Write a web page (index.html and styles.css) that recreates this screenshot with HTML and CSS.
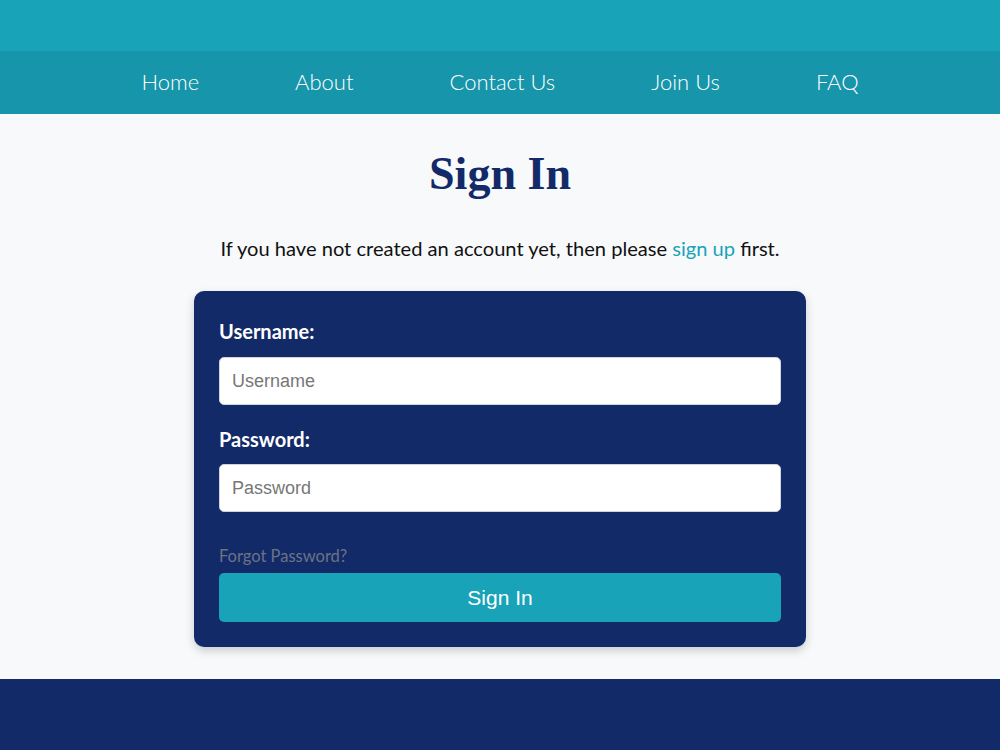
FILE: index.html
```html
<!DOCTYPE html>
<html lang="en">
<head>
<meta charset="utf-8">
<title>Sign In</title>
<link rel="stylesheet" href="styles.css">
</head>
<body>
<header class="site-header">
  <div class="topbar"></div>
  <nav class="nav">
    <a href="#" class="nav-link">Home</a>
    <a href="#" class="nav-link">About</a>
    <a href="#" class="nav-link">Contact Us</a>
    <a href="#" class="nav-link">Join Us</a>
    <a href="#" class="nav-link">FAQ</a>
  </nav>
</header>
<main class="main">
  <h1 class="title">Sign In</h1>
  <p class="intro">If you have not created an account yet, then please <a href="#" class="link">sign up</a> first.</p>
  <form class="card">
    <label class="label" for="u">Username:</label>
    <input class="input" id="u" type="text" placeholder="Username">
    <label class="label label-second" for="p">Password:</label>
    <input class="input" id="p" type="password" placeholder="Password">
    <a href="#" class="forgot">Forgot Password?</a>
    <button type="button" class="btn">Sign In</button>
  </form>
</main>
<footer class="footer"></footer>
</body>
</html>
```

FILE: styles.css
```css
* { box-sizing: border-box; }
html, body { margin: 0; padding: 0; }
body {
  background: #f7f9fb;
  font-family: Lato, "Open Sans", sans-serif;
  color: #111;
}
.topbar {
  height: 51px;
  background: #18a3b8;
}
.nav {
  height: 63px;
  padding-bottom: 2px;
  background: #1795aa;
  display: flex;
  justify-content: center;
  align-items: center;
  gap: 96px;
}
.nav-link {
  color: #fff;
  text-decoration: none;
  font-weight: 300;
  font-size: 22px;
}
.main {
  padding: 32px 0 32px;
  display: flex;
  flex-direction: column;
  align-items: center;
}
.title {
  margin: 0;
  font-family: "Liberation Serif", serif;
  font-weight: 700;
  font-size: 46px;
  line-height: 55px;
  color: #132a69;
}
.intro {
  margin: 32px 0 0;
  font-size: 20.1px;
  line-height: 30px;
  color: #111;
}
.link {
  color: #18a3b8;
  text-decoration: none;
}
.card {
  margin-top: 28px;
  width: 612px;
  background: #132a69;
  border-radius: 10px;
  padding: 25px;
  display: flex;
  flex-direction: column;
  box-shadow: 0 4px 10px rgba(0, 0, 0, 0.18);
}
.label {
  color: #fff;
  font-weight: 700;
  font-size: 20px;
  line-height: 30px;
  margin-bottom: 11px;
}
.label-second {
  margin-top: 19px;
  margin-bottom: 10px;
}
.input {
  height: 48px;
  border: 1px solid #ced4da;
  border-radius: 5px;
  background: #fff;
  padding: 0 12px;
  font-family: "Liberation Sans", Arial, sans-serif;
  font-size: 18px;
  color: #333;
}
.input::placeholder { color: #777; }
.forgot {
  margin-top: 32px;
  font-size: 16.5px;
  line-height: 24px;
  color: #6c7384;
  text-decoration: none;
}
.btn {
  margin-top: 5px;
  height: 49px;
  border: none;
  border-radius: 5px;
  background: #18a3b8;
  color: #fff;
  font-family: "Liberation Sans", Arial, sans-serif;
  font-size: 21px;
}
.footer {
  height: 80px;
  background: #132a69;
}
```
